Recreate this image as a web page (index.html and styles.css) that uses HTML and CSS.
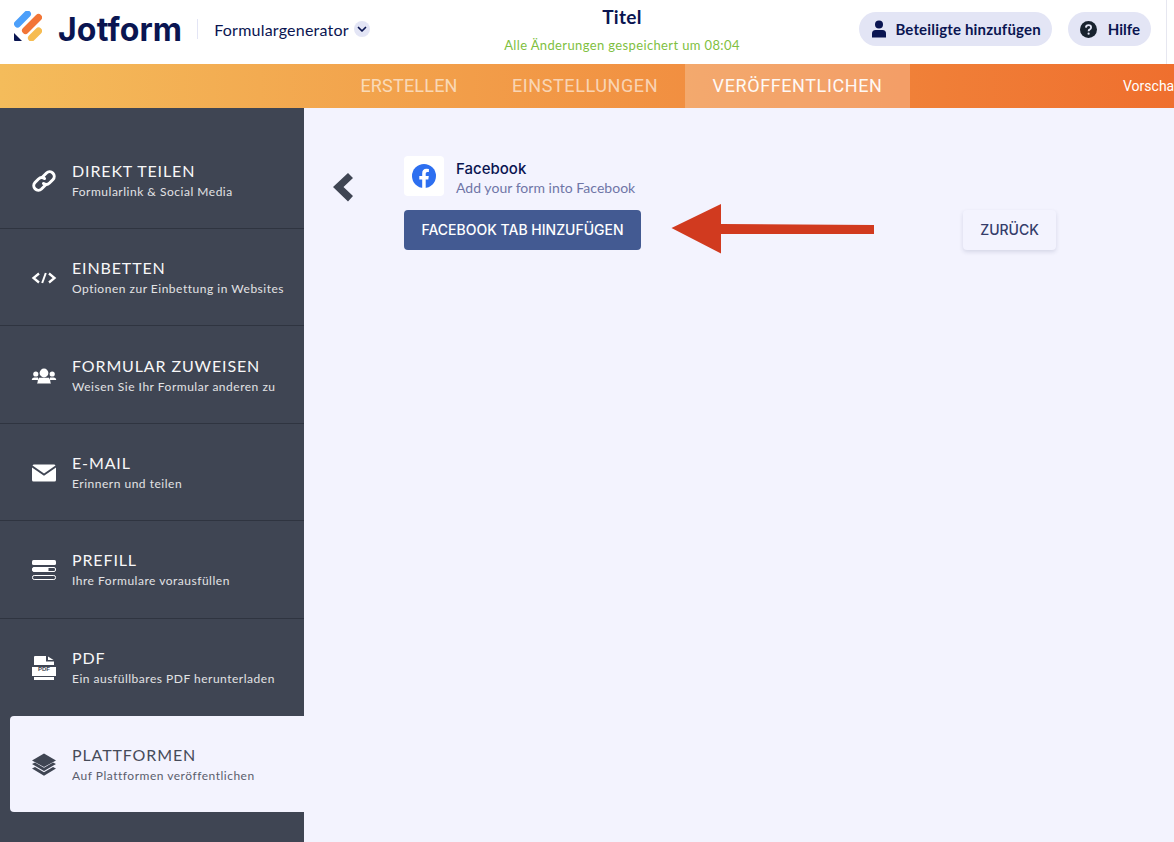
FILE: index.html
```html
<!DOCTYPE html>
<html lang="de">
<head>
<meta charset="utf-8">
<title>Jotform Formulargenerator</title>
<link rel="stylesheet" href="styles.css">
</head>
<body>
<header class="topbar">
  <div class="brand">
    <svg class="logo" width="28" height="30" viewBox="0 0 28 30">
      <rect x="-3.5" y="-10.500" width="7" height="21" rx="3.500" transform="translate(8.500 8) rotate(45)" fill="#4c9ffa" />
      <rect x="-3.500" y="-12.700" width="7" height="25.400" rx="3.500" transform="translate(18 13) rotate(45)" fill="#f27536" />
      <rect x="-3.500" y="-8.500" width="7" height="17" rx="3.500" transform="translate(21 23.500) rotate(45)" fill="#f6bc51" />
      <path d="M0 22 L8 30 H1 Q0 30 0 29 Z" fill="#0a1551" />
    </svg>
    <span class="wordmark">Jotform</span>
    <span class="divider"></span>
    <span class="product">Formulargenerator</span>
    <span class="caret">
      <svg width="10" height="7" viewBox="0 0 10 7"><path d="M1.500 1.500 L5 5 L8.500 1.500" fill="none" stroke="#0a1551" stroke-width="1.700" stroke-linecap="round" stroke-linejoin="round"/></svg>
    </span>
  </div>
  <div class="doc">
    <div class="doc-title">Titel</div>
    <div class="doc-saved">Alle Änderungen gespeichert um 08:04</div>
  </div>
  <div class="actions">
    <button class="pill pill-wide">
      <svg width="16" height="18" viewBox="0 0 16 18"><circle cx="8" cy="4.600" r="4" fill="#0a1551"/><path d="M1 17.500 V13.500 Q1 10 4.500 10 H11.500 Q15 10 15 13.500 V17.500 Z" fill="#0a1551"/></svg>
      Beteiligte hinzufügen
    </button>
    <button class="pill pill-help">
      <svg width="17" height="17" viewBox="0 0 17 17"><circle cx="8.500" cy="8.500" r="8.500" fill="#18222e"/><path d="M5.900 6.600 Q6 4.200 8.500 4.200 Q11.100 4.200 11.100 6.400 Q11.100 7.700 9.800 8.400 Q8.600 9 8.600 10.200" fill="none" stroke="#e3e5f5" stroke-width="1.800"/><circle cx="8.600" cy="12.700" r="1.100" fill="#e3e5f5"/></svg>
      Hilfe
    </button>
  </div>
</header>

<nav class="tabs">
  <a class="tab tab-create">ERSTELLEN</a>
  <a class="tab tab-settings">EINSTELLUNGEN</a>
  <a class="tab tab-active">VERÖFFENTLICHEN</a>
  <a class="preview">Vorscha</a>
</nav>

<div class="workspace">
  <aside class="sidebar">
    <div class="item">
      <svg class="ico" width="26" height="26" viewBox="0 0 26 26"><g fill="none" stroke="currentColor" stroke-width="3" stroke-linecap="round"><path d="M11 9.500 L15.500 5 A4.600 4.600 0 0 1 22 11.500 L18.500 15 A4.600 4.600 0 0 1 12.500 15.500"/><path d="M15 16.500 L10.500 21 A4.600 4.600 0 0 1 4 14.500 L7.500 11 A4.600 4.600 0 0 1 13.500 10.500"/></g></svg>
      <div class="label"><div class="name">DIREKT TEILEN</div><div class="desc">Formularlink &amp; Social Media</div></div>
    </div>
    <div class="item">
      <svg class="ico" width="26" height="26" viewBox="0 0 26 26"><g fill="none" stroke="currentColor" stroke-width="2.300"><path d="M8 8.500 L2.500 13 L8 17.500"/><path d="M18 8.500 L23.500 13 L18 17.500"/><path d="M14.800 8 L11.200 18" stroke-width="2"/></g></svg>
      <div class="label"><div class="name">EINBETTEN</div><div class="desc">Optionen zur Einbettung in Websites</div></div>
    </div>
    <div class="item">
      <svg class="ico" width="26" height="26" viewBox="0 0 26 26" fill="currentColor"><circle cx="13" cy="10" r="4.400"/><circle cx="4.800" cy="11" r="2.600"/><circle cx="21.200" cy="11" r="2.600"/><path d="M0.800 17 Q0.800 14.500 3.500 14.500 H7 L7 17 Z M25.200 17 Q25.200 14.500 22.500 14.500 H19 L19 17 Z"/><path d="M8 14.800 H18 Q19.500 17 19.500 19.500 L20 20.500 H6 L6.500 19.500 Q6.500 17 8 14.800 Z"/></svg>
      <div class="label"><div class="name">FORMULAR ZUWEISEN</div><div class="desc">Weisen Sie Ihr Formular anderen zu</div></div>
    </div>
    <div class="item">
      <svg class="ico" width="26" height="26" viewBox="0 0 26 26" fill="currentColor"><path d="M1.500 5.500 L13 13.500 L24.500 5.500 Q24 4.500 23 4.500 H3 Q2 4.500 1.500 5.500 Z"/><path d="M1 7.500 V20 Q1 21.500 2.500 21.500 H23.500 Q25 21.500 25 20 V7.500 L13 15.800 Z"/></svg>
      <div class="label"><div class="name">E-MAIL</div><div class="desc">Erinnern und teilen</div></div>
    </div>
    <div class="item">
      <svg class="ico" width="26" height="26" viewBox="0 0 26 26"><rect x="1" y="3" width="24" height="5" rx="1.500" fill="currentColor"/><rect x="1.500" y="10.500" width="23" height="4" rx="1.500" fill="none" stroke="currentColor"/><rect x="1.500" y="10.500" width="16" height="4" rx="1" fill="currentColor"/><rect x="1.500" y="18.500" width="23" height="4" rx="1.700" fill="none" stroke="currentColor"/></svg>
      <div class="label"><div class="name">PREFILL</div><div class="desc">Ihre Formulare vorausfüllen</div></div>
    </div>
    <div class="item item-plain">
      <svg class="ico" width="26" height="26" viewBox="0 0 26 26" fill="currentColor"><path d="M4 1 H15 V6.500 H23 V10 H3 V2 Q3 1 4 1 Z"/><path d="M17 1.500 L22.500 5 H17 Z"/><path d="M1 12 H25 V21 H1 Z"/><path d="M3 22 H23 V25 H3 Z"/></svg>
      <span class="pdf-tag">PDF</span>
      <div class="label"><div class="name">PDF</div><div class="desc">Ein ausfüllbares PDF herunterladen</div></div>
    </div>
    <div class="item item-active">
      <svg class="ico" width="26" height="26" viewBox="0 0 26 26" fill="currentColor"><path d="M13 1.500 L25 8.500 L13 15 L1 8.500 Z"/><path d="M1 12 L4 10.500 L13 15.800 L22 10.500 L25 12 L13 19 Z"/><path d="M1 16.500 L4 15 L13 20.300 L22 15 L25 16.500 L13 23.800 Z"/></svg>
      <div class="label"><div class="name">PLATTFORMEN</div><div class="desc">Auf Plattformen veröffentlichen</div></div>
    </div>
  </aside>

  <main class="main">
    <svg class="back" width="22" height="30" viewBox="0 0 22 30"><path d="M16 1 L21 6 L11.500 15 L21 24 L16 29.500 L1 15 Z" fill="#3f4553"/></svg>
    <section class="panel">
      <div class="app">
        <span class="tile">
          <svg width="24" height="24" viewBox="0 0 24 24"><circle cx="12" cy="12" r="12" fill="#2d6ff0"/><path d="M10.200 24 V15.500 H7.300 V12 H10.200 V9.400 Q10.200 4.800 14.500 4.800 Q15.800 4.800 16.900 5 V8 H15.300 Q13.700 8 13.700 9.600 V12 H16.800 L16.300 15.500 H13.700 V24 Z" fill="#fff"/></svg>
        </span>
        <div>
          <div class="app-name">Facebook</div>
          <div class="app-desc">Add your form into Facebook</div>
        </div>
      </div>
      <button class="fb-btn">FACEBOOK TAB HINZUFÜGEN</button>
    </section>
    <button class="back-btn">ZURÜCK</button>
    <svg class="arrow" width="204" height="52" viewBox="0 0 204 52"><path d="M0.500 25 L50 1 V21 L203 22 V31 L50 31 V50.500 Z" fill="#d13a1f"/></svg>
  </main>
</div>
</body>
</html>
```
FILE: styles.css
```css
* { box-sizing: border-box; }
html, body { margin: 0; height: 100%; }
body {
  width: 1174px;
  height: 842px;
  overflow: hidden;
  background: #f3f3fe;
  font-family: "Lato", "Liberation Sans", sans-serif;
  color: #0a1551;
}
button { font-family: inherit; border: 0; cursor: pointer; }

.topbar {
  height: 64px;
  background: #fff;
  display: grid;
  grid-template-columns: 1fr 1fr;
  position: relative;
  padding: 0 23px 0 14px;
}
.topbar::after {
  content: "";
  position: absolute;
  top: 0;
  right: 7px;
  width: 1px;
  height: 64px;
  background: #e6e7f0;
}
.brand { display: flex; align-items: center; height: 58px; }
.logo { margin-top: -6px; flex: none; }
.wordmark {
  font-family: "Inter", sans-serif;
  font-weight: 700;
  font-size: 32px;
  letter-spacing: 0.15px;
  margin-left: 16px;
  color: #0a1551;
}
.divider { width: 1px; height: 20px; background: #e3e5f5; margin-left: 15px; flex: none; }
.product { font-size: 16px; margin-left: 16px; letter-spacing: 0.22px; }
.caret {
  width: 16px; height: 16px; border-radius: 50%;
  background: #e3e5f5; margin-left: 5px;
  display: flex; align-items: center; justify-content: center;
  flex: none;
}
.doc {
  position: absolute;
  left: 472px;
  width: 300px;
  top: 5px;
  text-align: center;
}
.doc-title { font-size: 19px; font-weight: 700; line-height: 24px; letter-spacing: 0.3px; }
.doc-saved { font-size: 13px; color: #7fbf3f; margin-top: 7px; line-height: 18px; letter-spacing: 0.37px; }
.actions { display: flex; justify-content: flex-end; align-items: flex-start; gap: 16px; padding-top: 12px; grid-column: 2; }
.pill {
  height: 34px;
  border-radius: 17px;
  background: #e3e5f5;
  color: #0a1551;
  font-size: 15px;
  font-weight: 700;
  display: flex;
  align-items: center;
  padding: 0 11px 0 12px;
}
.pill-wide { gap: 8px; letter-spacing: 0.17px; }
.pill-help { gap: 11px; }

.tabs {
  height: 44px;
  display: flex;
  padding-left: 333px;
  overflow: hidden;
  background: linear-gradient(90deg, #f4bc5b 0%, #ef6f2e 100%);
  font-family: "Roboto", sans-serif;
}
.tab {
  line-height: 44px;
  font-size: 18px;
  color: rgba(255, 255, 255, 0.62);
  white-space: nowrap;
  text-align: center;
  flex: none;
}
.tab-create { width: 152px; letter-spacing: 0.2px; }
.tab-settings { width: 200px; letter-spacing: 0.6px; }
.tab-active { width: 225px; letter-spacing: 0.6px; background: rgba(255, 255, 255, 0.25); color: #fff; opacity: 0.95; }
.preview {
  margin-left: 213px;
  line-height: 44px;
  font-size: 14px;
  color: #fff;
  white-space: nowrap;
  flex: none;
}

.workspace { display: flex; height: 734px; }
.sidebar {
  width: 304px;
  flex: none;
  background: #3f4553;
  padding-top: 23.6px;
  color: #fff;
}
.item {
  height: 97.4px;
  padding: 0 0 0 31px;
  display: flex;
  align-items: center;
  gap: 15px;
  border-bottom: 1px solid #2f3440;
  position: relative;
}
.item .ico { flex: none; margin-top: 2px; }
.item .label { margin-top: 1px; }
.item-plain { border-bottom: 0; }
.item-active {
  margin-left: 10px;
  padding-left: 21px;
  height: 96px;
  background: #f3f3fe;
  color: #3f4553;
  border-bottom: 0;
  border-radius: 4px 0 0 4px;
}
.name { font-size: 16px; letter-spacing: 0.87px; line-height: 20px; color: inherit; opacity: 0.96; }
.desc { font-size: 12px; letter-spacing: 0.51px; line-height: 16px; margin-top: 3px; opacity: 0.85; }
.pdf-tag {
  position: absolute;
  left: 37px;
  top: 47px;
  font: 700 6px "Liberation Sans", sans-serif;
  color: #3f4553;
  width: 14px;
  text-align: center;
}

.main {
  flex: 1;
  position: relative;
  display: flex;
  align-items: flex-start;
  padding: 48px 0 0 28px;
}
.back { margin-top: 16px; flex: none; }
.panel { margin-left: 50px; width: 237px; flex: none; }
.app { display: flex; align-items: center; gap: 12px; height: 40px; }
.tile {
  width: 40px; height: 40px;
  background: #fff;
  border-radius: 4px;
  display: flex; align-items: center; justify-content: center;
  flex: none;
}
.app-name { font-family: "Inter", sans-serif; font-size: 15px; font-weight: 500; line-height: 20px; margin-top: 4px; }
.app-desc { font-size: 14px; color: #6f76a7; line-height: 18px; margin-top: 0; white-space: nowrap; letter-spacing: 0.03px; }
.fb-btn {
  margin-top: 14px;
  width: 237px;
  height: 40px;
  background: #435a92;
  color: #fff;
  border-radius: 4px;
  font-family: "Inter", sans-serif;
  font-size: 14px;
  font-weight: 500;
  letter-spacing: 0;
  white-space: nowrap;
  padding: 0 0 1px;
}
.back-btn {
  margin: 54px 0 0 322px;
  width: 93px;
  height: 40px;
  background: #f3f3fe;
  color: #343c6a;
  border-radius: 4px;
  font-family: "Inter", sans-serif;
  font-size: 14px;
  font-weight: 500;
  letter-spacing: 0;
  padding: 0 0 1px;
  box-shadow: 0 2px 4px rgba(37, 45, 91, 0.14);
}
.arrow { position: absolute; left: 367px; top: 95px; }
```
